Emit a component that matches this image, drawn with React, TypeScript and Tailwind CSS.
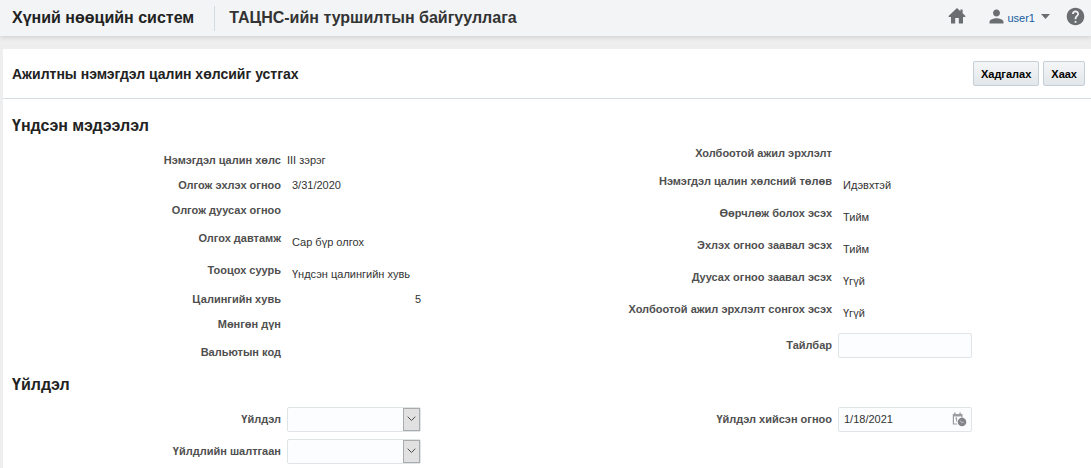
import type { ReactNode } from 'react';
import { MdHelp, MdPerson } from 'react-icons/md';

type Row = { label: string; value?: string; tall?: boolean; kind?: 'flush' | 'number' };

const leftRows: Row[] = [
  { label: 'Нэмэгдэл цалин хөлс', value: 'III зэрэг', kind: 'flush' },
  { label: 'Олгож эхлэх огноо', value: '3/31/2020' },
  { label: 'Олгож дуусах огноо' },
  { label: 'Олгох давтамж', value: 'Сар бүр олгох', tall: true },
  { label: 'Тооцох суурь', value: 'Үндсэн цалингийн хувь', tall: true },
  { label: 'Цалингийн хувь', value: '5', kind: 'number' },
  { label: 'Мөнгөн дүн' },
  { label: 'Вальютын код', tall: true },
];

const rightRows: Row[] = [
  { label: 'Холбоотой ажил эрхлэлт' },
  { label: 'Нэмэгдэл цалин хөлсний төлөв', value: 'Идэвхтэй', tall: true },
  { label: 'Өөрчлөж болох эсэх', value: 'Тийм', tall: true },
  { label: 'Эхлэх огноо заавал эсэх', value: 'Тийм', tall: true },
  { label: 'Дуусах огноо заавал эсэх', value: 'Үгүй', tall: true },
  { label: 'Холбоотой ажил эрхлэлт сонгох эсэх', value: 'Үгүй', tall: true },
];

const labelClass = 'w-[278px] shrink-0 text-right font-bold text-[#4f4f4f]';
const inputClass =
  'h-[25px] w-full rounded-[2px] border border-[#dfe4e7] bg-[#fcfdfe] px-[5px] text-[11px] text-[#333333] outline-none focus:border-[#0572ce]';

function HomeIcon() {
  return (
    <svg viewBox="0 0 18 16" className="h-4 w-[18px]" fill="#6b6e70" aria-hidden="true">
      <path d="M9 0 0.3 8.2 1.2 9.1H3V15.6H7.2V10H10.8V15.6H15V9.1H16.8L17.7 8.2 14.6 5.3V1.6H12.4V3.2Z" />
    </svg>
  );
}

function CalendarIcon() {
  return (
    <svg viewBox="0 0 15 15" className="h-[15px] w-[15px]" aria-hidden="true">
      <path d="M1 2H10.5V6H9.5V4.5H2V11.5H5V12.5H0.8V2Z" fill="#9a9d9f" />
      <path d="M2.2 0.5H3.6V3H2.2ZM7.4 0.5H8.8V3H7.4Z" fill="#9a9d9f" />
      <path d="M3.3 6.5 4.6 5.6V9.6" fill="none" stroke="#9a9d9f" />
      <circle cx="10" cy="10" r="4.3" fill="#82868a" />
      <path d="M8 8.8 9.8 10.4H11.6" fill="none" stroke="#d5d8da" strokeWidth="0.8" />
    </svg>
  );
}

function InfoRow({ label, value, tall, kind }: Row) {
  const text =
    kind === 'number' ? 'w-[134px] text-right' : kind === 'flush' ? '' : tall ? 'pl-[5px] pt-[7px]' : 'pl-[5px]';
  return (
    <div className={tall ? 'flex h-8 items-center gap-1.5' : 'flex h-[25px] items-center gap-1.5'}>
      <dt className={labelClass}>{label}</dt>
      <dd className={text}>{value}</dd>
    </div>
  );
}

function FieldRow({ id, label, children }: { id: string; label: string; children: ReactNode }) {
  return (
    <div className="flex h-8 items-center gap-1.5">
      <label htmlFor={id} className={labelClass}>
        {label}
      </label>
      <div className="relative w-[134px]">{children}</div>
    </div>
  );
}

function SelectBox({ id }: { id: string }) {
  return (
    <>
      <select id={id} className={`${inputClass} block appearance-none`}>
        <option value=""></option>
      </select>
      <span className="pointer-events-none absolute inset-y-px right-px flex w-[17px] items-center justify-center border border-[#a9abac] bg-[#e1e1e1]">
        <svg viewBox="0 0 9 6" className="h-1.5 w-[9px]" fill="none" stroke="#4a4a4a" aria-hidden="true">
          <path d="M0.7 0.7 4.5 4.5 8.3 0.7" />
        </svg>
      </span>
    </>
  );
}

function SectionTitle({ children }: { children: ReactNode }) {
  return <h2 className="px-[9px] pb-1 text-base leading-5 font-bold text-[#222222]">{children}</h2>;
}

const buttonClass =
  'h-[25px] rounded-[2px] border border-[#c4ced7] bg-linear-to-b from-[#f4f5f7] to-[#e3e7ea] px-[7px] text-[11px] font-bold text-black';

export default function App() {
  return (
    <div className="flex min-h-screen flex-col bg-[#eeeeee] font-['Liberation_Sans',Arial,sans-serif] text-[11px] leading-4 text-[#333333]">
      <header className="flex h-9 items-center justify-between bg-[#f2f4f6] pr-[5px] pl-3 shadow-[0_1px_5px_rgba(0,0,0,0.15)]">
        <div className="flex items-center text-base leading-5 font-bold">
          <span className="text-[#222222]">Хүний нөөцийн систем</span>
          <span className="ml-5 h-[25px] border-l border-[#d0dbe4]" />
          <span className="ml-3.5 text-[#333333]">ТАЦНС-ийн туршилтын байгууллага</span>
        </div>
        <nav className="flex items-center">
          <a href="#home" aria-label="Нүүр" className="pb-1">
            <HomeIcon />
          </a>
          <button type="button" className="ml-5 flex items-center text-[#145c9e]">
            <MdPerson className="mb-1 size-[21px] text-[#6b6e70]" />
            <span>user1</span>
            <svg viewBox="0 0 9 5" className="mb-1 ml-1.5 h-[5px] w-[9px]" fill="#6b6e70" aria-hidden="true">
              <path d="M0 0H9L4.5 5Z" />
            </svg>
          </button>
          <a href="#help" aria-label="Тусламж" className="ml-[15px] pb-1 text-[#6b6e70]">
            <MdHelp className="size-[21px]" />
          </a>
        </nav>
      </header>

      <main className="mt-[13px] ml-[3px] flex-1 bg-white">
        <div className="flex h-[50px] items-center justify-between border-b border-[#d6dfe6] pr-1.5 pl-[9px]">
          <h1 className="text-sm font-bold text-[#222222]">Ажилтны нэмэгдэл цалин хөлсийг устгах</h1>
          <div className="flex gap-1">
            <button type="button" className={buttonClass}>
              Хадгалах
            </button>
            <button type="button" className={buttonClass}>
              Хаах
            </button>
          </div>
        </div>

        <section className="pt-[17px]">
          <SectionTitle>Үндсэн мэдээлэл</SectionTitle>
          <div className="grid grid-cols-2 gap-x-3.5">
            <dl className="pt-[7px]">
              {leftRows.map((row) => (
                <InfoRow key={row.label} {...row} />
              ))}
            </dl>
            <div>
              <dl>
                {rightRows.map((row) => (
                  <InfoRow key={row.label} {...row} />
                ))}
              </dl>
              <div className="pt-1">
                <FieldRow id="note" label="Тайлбар">
                  <input id="note" type="text" className={`${inputClass} block`} />
                </FieldRow>
              </div>
            </div>
          </div>
        </section>

        <section className="pt-[7px]">
          <SectionTitle>Үйлдэл</SectionTitle>
          <div className="grid grid-cols-2 gap-x-3.5 pt-1">
            <div>
              <FieldRow id="action" label="Үйлдэл">
                <SelectBox id="action" />
              </FieldRow>
              <FieldRow id="reason" label="Үйлдлийн шалтгаан">
                <SelectBox id="reason" />
              </FieldRow>
            </div>
            <div>
              <FieldRow id="date" label="Үйлдэл хийсэн огноо">
                <input id="date" type="text" defaultValue="1/18/2021" className={`${inputClass} block`} />
                <button type="button" aria-label="Огноо сонгох" className="absolute top-[5px] right-[5px]">
                  <CalendarIcon />
                </button>
              </FieldRow>
            </div>
          </div>
        </section>
      </main>
    </div>
  );
}
